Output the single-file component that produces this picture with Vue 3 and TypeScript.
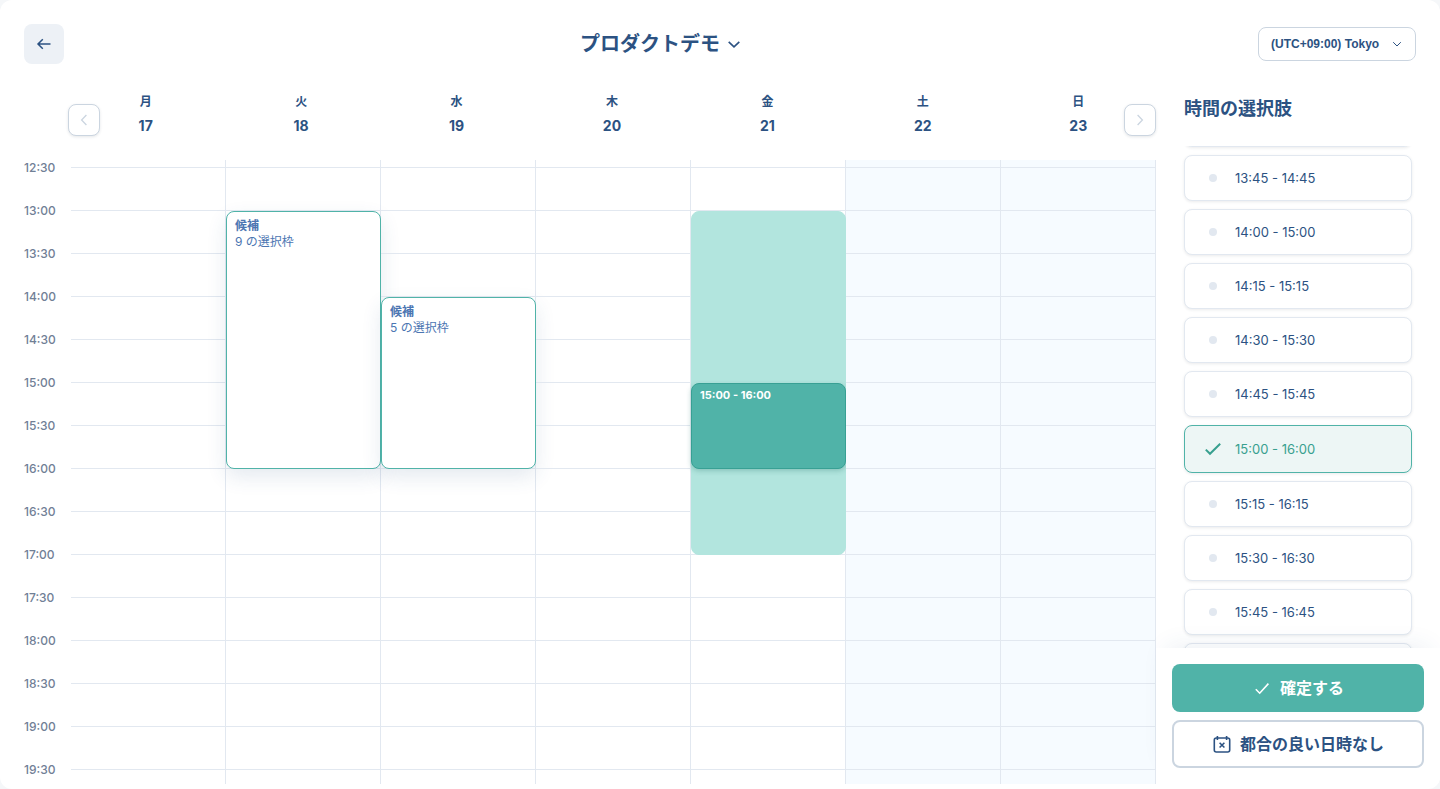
<script setup lang="ts">
import { onMounted, ref } from 'vue'

interface CalendarEvent {
  kind: 'candidate' | 'range' | 'selected'
  start: number
  end: number
  title?: string
  detail?: string
}

interface Day {
  name: string
  date: number
  weekend?: boolean
  events: CalendarEvent[]
}

const SLOT = 43
const FIRST_LINE = 8
const FIRST_HOUR = 12.5

const days: Day[] = [
  { name: '月', date: 17, events: [] },
  { name: '火', date: 18, events: [{ kind: 'candidate', start: 13, end: 16, title: '候補', detail: '9 の選択枠' }] },
  { name: '水', date: 19, events: [{ kind: 'candidate', start: 14, end: 16, title: '候補', detail: '5 の選択枠' }] },
  { name: '木', date: 20, events: [] },
  {
    name: '金',
    date: 21,
    events: [
      { kind: 'range', start: 13, end: 17 },
      { kind: 'selected', start: 15, end: 16, title: '15:00 - 16:00' },
    ],
  },
  { name: '土', date: 22, weekend: true, events: [] },
  { name: '日', date: 23, weekend: true, events: [] },
]

const times = Array.from({ length: 15 }, (_, i) => {
  const minutes = FIRST_HOUR * 60 + i * 30
  return `${Math.floor(minutes / 60)}:${minutes % 60 === 0 ? '00' : '30'}`
})

const options = [
  '13:45 - 14:45',
  '14:00 - 15:00',
  '14:15 - 15:15',
  '14:30 - 15:30',
  '14:45 - 15:45',
  '15:00 - 16:00',
  '15:15 - 16:15',
  '15:30 - 16:30',
  '15:45 - 16:45',
]
const picked = ref('15:00 - 16:00')
const list = ref<HTMLElement | null>(null)

function place(event: CalendarEvent) {
  return {
    top: `${FIRST_LINE + (event.start - FIRST_HOUR) * 2 * SLOT}px`,
    height: `${(event.end - event.start) * 2 * SLOT}px`,
  }
}

onMounted(() => {
  if (list.value) list.value.scrollTop = 45
})
</script>

<template>
  <div class="app">
    <header class="topbar">
      <button class="back" type="button" aria-label="戻る">
        <svg width="16" height="16" viewBox="0 0 16 16"><path d="M14.5 8H2M6.8 3.2 2 8l4.8 4.8" /></svg>
      </button>
      <button class="title" type="button" aria-haspopup="menu">
        <span>プロダクトデモ</span>
        <svg width="16" height="16" viewBox="0 0 16 16"><path d="m2.7 5.8 5.3 5.1 5.3-5.1" /></svg>
      </button>
      <button class="zone" type="button" aria-haspopup="listbox">
        <span>(UTC+09:00) Tokyo</span>
        <svg width="12" height="12" viewBox="0 0 12 12"><path d="M2.2 4.2 6 8l3.8-3.8" /></svg>
      </button>
    </header>

    <div class="body">
      <main class="calendar">
        <div class="days">
          <div v-for="day in days" :key="day.date" class="day-head">
            <span class="day-name">{{ day.name }}</span>
            <span class="day-date">{{ day.date }}</span>
          </div>
          <button class="nav prev" type="button" aria-label="前の週" disabled>
            <svg width="16" height="16" viewBox="0 0 16 16"><path d="M10.4 3 5.6 8l4.8 5" /></svg>
          </button>
          <button class="nav next" type="button" aria-label="次の週" disabled>
            <svg width="16" height="16" viewBox="0 0 16 16"><path d="m5.6 3 4.8 5-4.8 5" /></svg>
          </button>
        </div>
        <div class="grid">
          <div class="times">
            <span v-for="time in times" :key="time" class="time">{{ time }}</span>
          </div>
          <div class="columns">
            <div v-for="day in days" :key="day.date" class="column" :class="{ weekend: day.weekend }">
              <div v-for="time in times" :key="time" class="slot"></div>
              <div
                v-for="event in day.events"
                :key="event.kind"
                class="event"
                :class="event.kind"
                :style="place(event)"
              >
                <strong v-if="event.title">{{ event.title }}</strong>
                <span v-if="event.detail">{{ event.detail }}</span>
              </div>
            </div>
          </div>
        </div>
      </main>

      <aside class="side">
        <h2>時間の選択肢</h2>
        <div ref="list" class="options">
          <div class="option"></div>
          <label v-for="option in options" :key="option" class="option" :class="{ active: picked === option }">
            <span class="mark">
              <input v-model="picked" type="radio" name="slot" :value="option" />
              <svg v-if="picked === option" width="16" height="16" viewBox="0 0 16 16">
                <path d="M.8 8.6 5 12.8 15.2 2.8" />
              </svg>
            </span>
            <span>{{ option }}</span>
          </label>
          <div class="option"></div>
        </div>
        <footer class="actions">
          <button class="confirm" type="button">
            <svg width="20" height="20" viewBox="0 0 20 20"><path d="m3.8 11.2 3.9 4L16.4 5.6" /></svg>
            <span>確定する</span>
          </button>
          <button class="none" type="button">
            <svg width="20" height="20" viewBox="0 0 20 20">
              <rect x="2.3" y="4" width="15.4" height="14" rx="2" />
              <path d="M5.4 2v4M14.6 2v4M7.6 8.7l4.8 4.8M12.4 8.7l-4.8 4.8" />
            </svg>
            <span>都合の良い日時なし</span>
          </button>
        </footer>
      </aside>
    </div>
  </div>
</template>

<style>
body {
  background: #f5f7f9;
}
</style>

<style scoped>
.app,
.app * {
  box-sizing: border-box;
}

.app {
  display: flex;
  flex-direction: column;
  height: 100vh;
  padding-bottom: 5px;
  overflow: hidden;
  border-radius: 12px;
  background: #fff;
  color: #2c5282;
  font-family: Inter, "Noto Sans CJK JP", sans-serif;
}

button {
  margin: 0;
  padding: 0;
  border: 0;
  background: none;
  color: inherit;
  font: inherit;
  cursor: pointer;
}

svg {
  display: block;
  flex: none;
  fill: none;
  stroke: currentColor;
}

.topbar {
  display: flex;
  flex: none;
  align-items: center;
  justify-content: space-between;
  height: 88px;
  padding: 0 24px;
}

.back {
  display: grid;
  place-items: center;
  width: 40px;
  height: 40px;
  border-radius: 8px;
  background: #edf1f6;
}

.back svg {
  stroke-width: 1.5;
}

.title {
  display: flex;
  align-items: center;
  gap: 6px;
  font-size: 20px;
  font-weight: 700;
  line-height: 28px;
}

.title svg {
  stroke-width: 1.6;
}

.zone {
  display: flex;
  align-items: center;
  justify-content: space-between;
  gap: 8px;
  min-width: 158px;
  height: 34px;
  padding: 0 12px;
  border: 1px solid #cbd5e0;
  border-radius: 8px;
  font-family: "Liberation Sans", Arial, sans-serif;
  font-size: 12px;
  font-weight: 700;
  line-height: 16px;
}

.body {
  display: flex;
  flex: 1;
  min-height: 0;
}

.calendar {
  display: flex;
  flex: 1;
  flex-direction: column;
  min-width: 0;
}

.days {
  position: relative;
  display: grid;
  flex: none;
  grid-template-columns: repeat(7, 1fr);
  height: 72px;
  margin-left: 68px;
}

.day-head {
  display: flex;
  flex-direction: column;
  align-items: center;
  gap: 6px;
  padding-top: 5px;
  font-weight: 700;
}

.day-name {
  font-size: 12px;
  line-height: 18px;
}

.day-date {
  font-size: 14px;
  line-height: 18px;
}

.nav {
  position: absolute;
  top: 16px;
  display: grid;
  place-items: center;
  width: 32px;
  height: 32px;
  border: 1px solid #cbd5e0;
  border-radius: 8px;
  background: #fff;
  box-shadow: 0 1px 3px rgba(45, 55, 72, 0.12);
  color: #cbd5e0;
}

.nav svg {
  stroke-width: 1.3;
}

.prev {
  left: 0;
}

.next {
  right: 0;
}

.grid {
  display: flex;
  flex: 1;
  min-height: 0;
  overflow: hidden;
}

.times {
  display: flex;
  flex: none;
  flex-direction: column;
  gap: 27px;
  width: 71px;
  padding-left: 24px;
}

.time {
  flex: none;
  color: #718096;
  font-size: 12px;
  font-weight: 500;
  line-height: 16px;
}

.columns {
  display: grid;
  flex: 1;
  grid-template-columns: repeat(7, 1fr);
}

.column {
  position: relative;
  border-right: 1px solid #e2e8f0;
}

.weekend {
  background: #f6fbff;
}

.slot {
  height: 43px;
  border-bottom: 1px solid #e2e8f0;
}

.slot:first-child {
  height: 8px;
}

.event {
  position: absolute;
  right: -1px;
  left: 0;
  display: flex;
  flex-direction: column;
  padding: 6px 8px;
  border: 1px solid transparent;
  border-radius: 8px;
  font-size: 12px;
  line-height: 16px;
}

.candidate {
  border-color: #50b3a8;
  background: #fff;
  box-shadow: 0 8px 20px rgba(44, 82, 130, 0.12);
  color: #4c76b2;
}

.range {
  border-color: #b2e5de;
  background: #b2e5de;
}

.selected {
  padding-top: 3px;
  border-color: #38a094;
  background: #50b3a8;
  box-shadow: 0 2px 5px rgba(40, 120, 110, 0.3);
  color: #fff;
  font-size: 11px;
}

.side {
  display: flex;
  flex: none;
  flex-direction: column;
  width: 284px;
}

h2 {
  flex: none;
  margin: 0;
  padding: 7px 28px 23px;
  font-size: 18px;
  font-weight: 700;
  line-height: 28px;
}

.options {
  display: flex;
  flex: 1;
  flex-direction: column;
  gap: 8px;
  min-height: 0;
  padding: 0 28px;
  overflow-y: auto;
  scrollbar-width: none;
}

.option {
  display: flex;
  flex: none;
  align-items: center;
  gap: 14px;
  height: 46px;
  padding: 0 20px;
  border: 1px solid #e2e8f0;
  border-radius: 8px;
  background: #fff;
  box-shadow: 0 1px 3px rgba(45, 55, 72, 0.1);
  font-size: 13px;
  line-height: 20px;
  cursor: pointer;
}

.mark {
  display: grid;
  flex: none;
  place-items: center;
  width: 16px;
  height: 16px;
}

.mark input {
  width: 8px;
  height: 8px;
  margin: 0;
  border-radius: 50%;
  background: #e2e8f0;
  appearance: none;
}

.active {
  height: 48px;
  border-color: #50b3a8;
  background: #edf6f5;
  color: #38a08f;
}

.active input {
  width: 0;
  height: 0;
}

.active svg {
  stroke-width: 2;
}

.mark > * {
  grid-area: 1 / 1;
}

.actions {
  position: relative;
  display: flex;
  flex: none;
  flex-direction: column;
  gap: 8px;
  padding: 16px;
  background: #fff;
  box-shadow: 0 -12px 24px -12px rgba(44, 82, 130, 0.1);
}

.confirm,
.none {
  display: flex;
  align-items: center;
  justify-content: center;
  gap: 8px;
  height: 48px;
  border-radius: 8px;
  font-size: 16px;
  font-weight: 700;
  line-height: 24px;
}

.confirm {
  background: #50b3a8;
  color: #fff;
}

.confirm svg {
  stroke-width: 1.6;
}

.none {
  border: 2px solid #cbd5e0;
}

.none svg {
  stroke-width: 1.6;
}
</style>
